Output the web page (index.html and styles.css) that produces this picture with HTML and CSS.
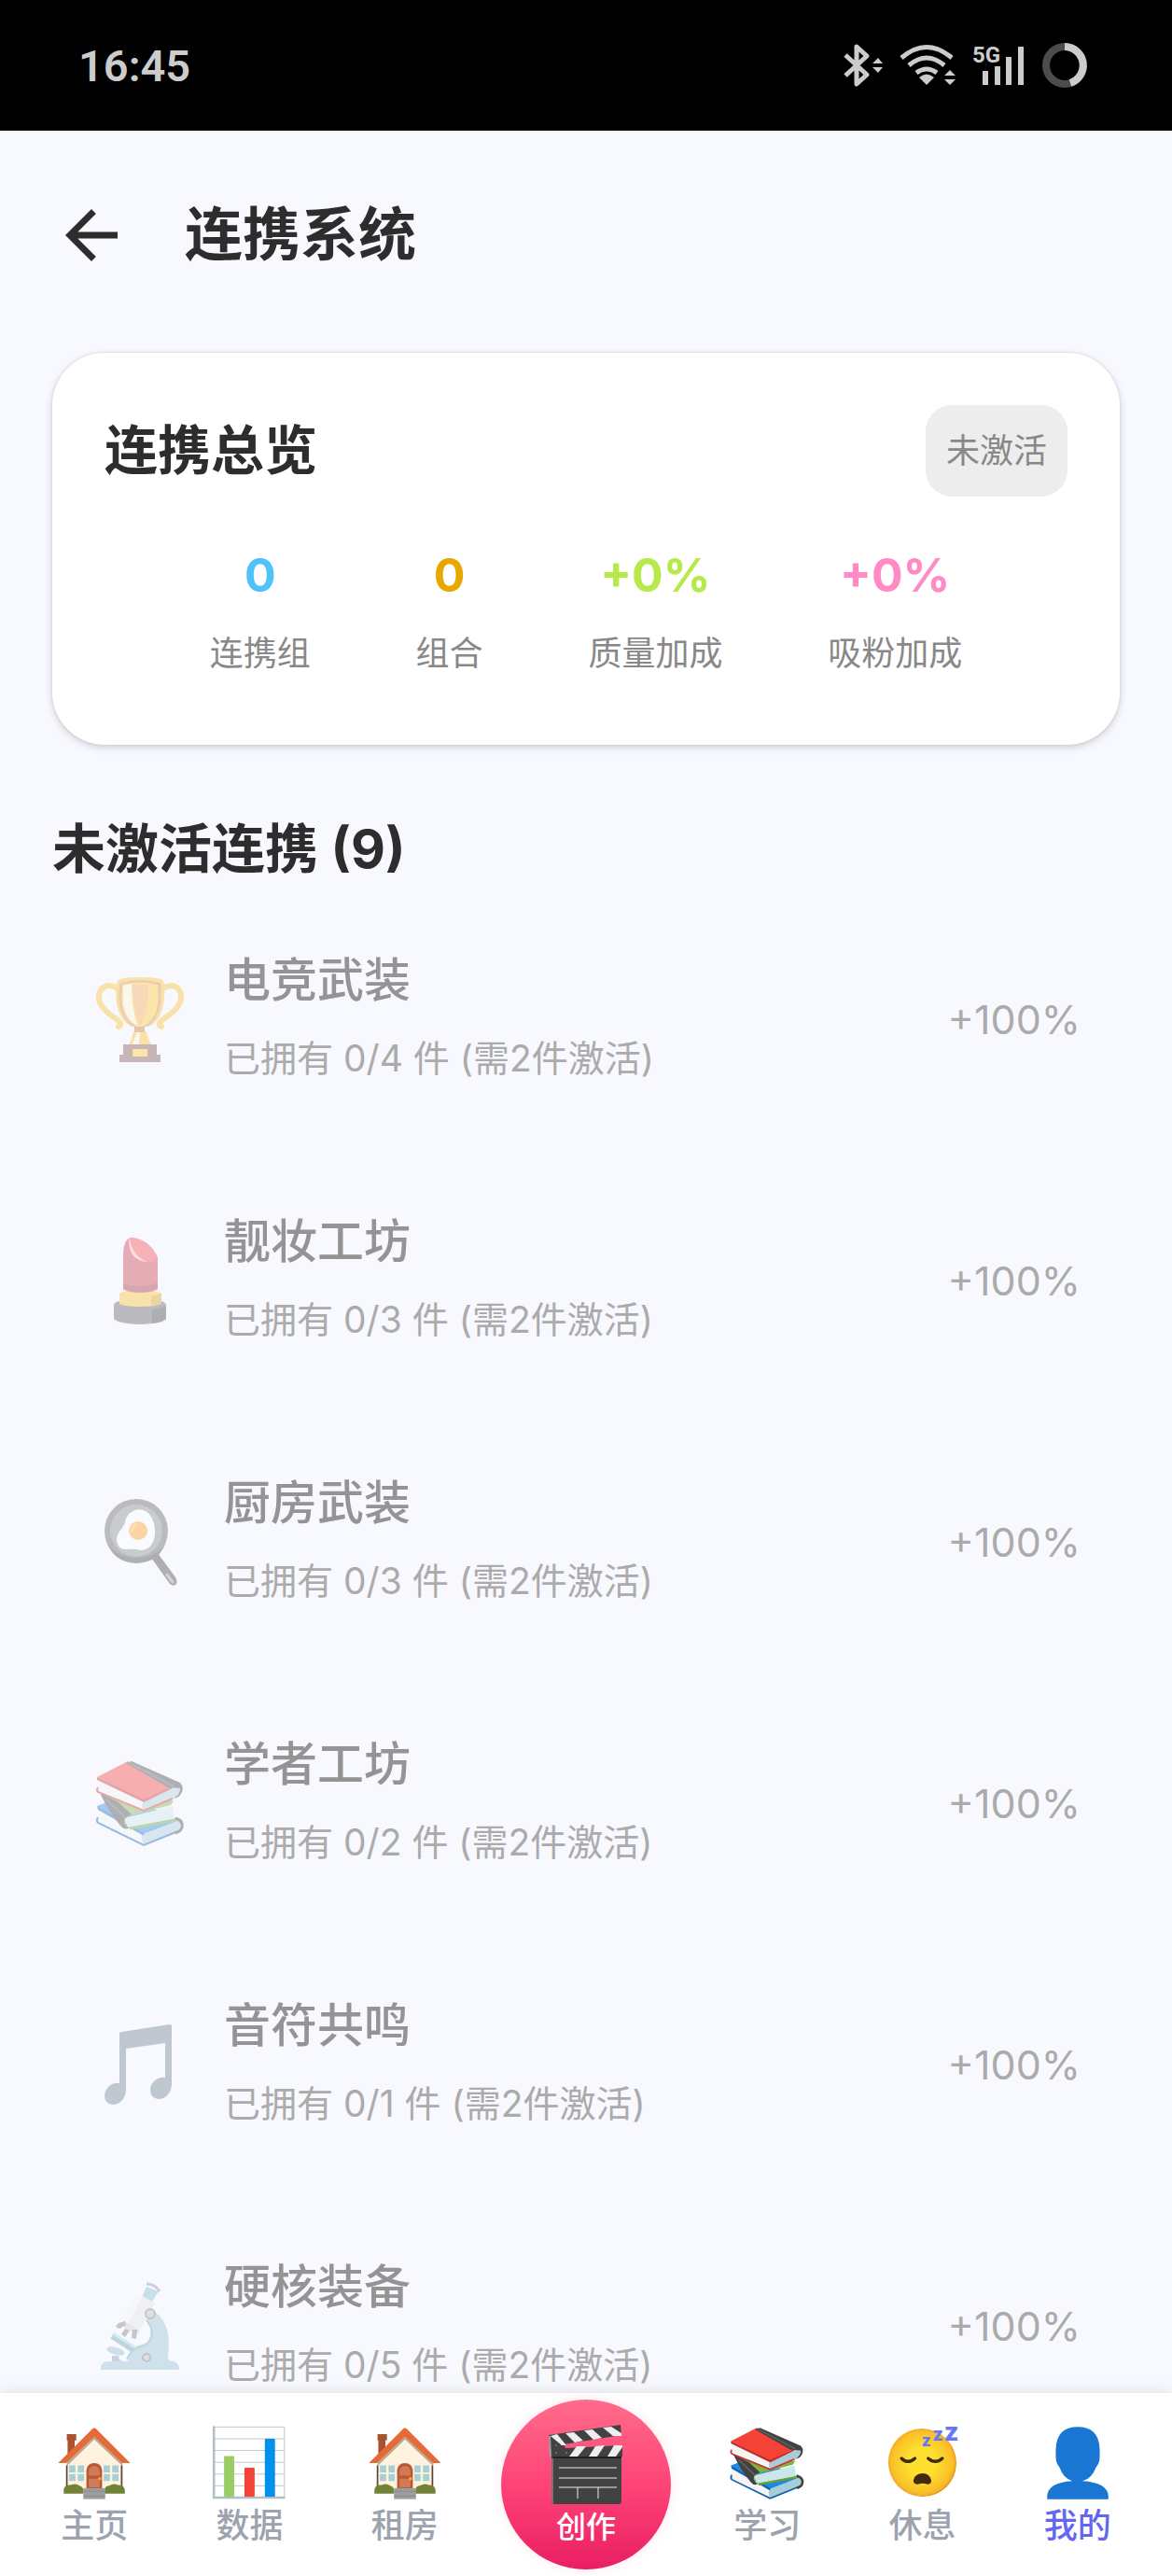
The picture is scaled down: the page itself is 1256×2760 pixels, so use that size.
FILE: index.html
```html
<!DOCTYPE html>
<html lang="zh-CN">
<head>
	<meta charset="UTF-8">
	<meta name="viewport" content="width=device-width, initial-scale=1">
	<title>连携系统</title>
	<link rel="stylesheet" href="styles.css">
</head>

<body>
	<!-- 公用图标 -->
	<svg class="icon-defs" aria-hidden="true">
		<symbol id="icon-books" viewBox="0 0 100 100">
			<path d="M4 53 L33 42 L95 69 L54 84 Z" fill="#1e88e5"/>
			<path d="M5 57 L54 83 L92 69 Q96 74 93 80 L54 94 L5 70 Z" fill="#f5f5f5"/>
			<path d="M54 83 L92 68 Q96 74 93 80 L54 94 Q50 88 54 83 Z" fill="#a9cdd8"/>
			<path d="M4 53 L54 82 L54 85 L5 57 Z" fill="#0d62b5"/>
			<path d="M5 65 Q3 69 5 71 L54 95 L91 80" fill="none" stroke="#0d5cab" stroke-width="2"/>
			<path d="M88 66 Q97 69 95 76 Q94 80 88 82" fill="none" stroke="#424242" stroke-width="3"/>
			<path d="M7 39 L30 48 L86 47 L83 52 L37 64 L33 77 Z" fill="#7cb342"/>
			<path d="M33 66 L85 53 L87 67 L37 77 Z" fill="#c9e7e6"/>
			<path d="M39 77 L88 68" stroke="#689f38" stroke-width="3"/>
			<path d="M7 39 L27 49 L41 62 Q32 65 33 71 Q34 75 39 76 Q34 80 29 74 Q17 60 7 39 Z" fill="#424242"/>
			<path d="M14 46 L35 66" stroke="#616161" stroke-width="2"/>
			<path d="M5 25 L54 48 L93 30 Q96 36 91 42 L54 57 L5 37 Z" fill="#f5f5f5"/>
			<path d="M54 48 L92 31 Q96 36 91 43 L54 57 Q50 52 54 48 Z" fill="#a9cdd8"/>
			<path d="M4 22 L37 5 L86 31 L54 47 Z" fill="#f44336"/>
			<path d="M4 22 L54 46 L84 32 L85 34 L54 49 L4 25 Z" fill="#c62828"/>
			<path d="M5 33 Q3 36 5 38 L54 58 L85 45" fill="none" stroke="#d32f2f" stroke-width="2"/>
			<path d="M35 7 L41 5 L93 28 Q98 33 94 40 Q92 44 86 45 Q94 40 93 34 L80 33 Z" fill="#424242"/>
			<path d="M39 7 L86 32" stroke="#616161" stroke-width="2"/>
		</symbol>
		<symbol id="icon-house" viewBox="0 0 100 100">
			<path d="M15 13 H27 V21 H25 V40 H16 V21 H15 Z" fill="#a9532f"/>
			<path d="M15 48 L50 14 L86 48 V88 H15 Z" fill="#fff3e0"/>
			<path d="M15 42 L50 11 L86 42 V54 L50 20 L15 54 Z" fill="#bcaa94"/>
			<path d="M15 53 V80 M85 53 V80" stroke="#5d4037" stroke-width="2"/>
			<path d="M50 5 Q52 5 54 8 L96 50 H86 L50 16 L14 50 H4 L46 8 Q48 5 50 5 Z" fill="#e66a35"/>
			<path d="M18 53 h8 v9 h-8 Z M29 53 h8 v9 h-8 Z M18 64 h8 v9 h-8 Z M29 64 h8 v9 h-8 Z M62 53 h8 v9 h-8 Z M73 53 h8 v9 h-8 Z M62 64 h8 v9 h-8 Z M73 64 h8 v9 h-8 Z" fill="#a5d0d6"/>
			<path d="M40 82 V59 Q41 50 50 50 Q59 50 60 59 V82 Z" fill="#b95738"/>
			<path d="M43 66 V60 Q44 54 50 54 Q56 54 57 60 V66 Z M43 70 h14 v11 h-14 Z" fill="#d07b58"/>
			<circle cx="57" cy="70" r="2" fill="#ffb300"/>
			<path d="M11 89 V84 Q12 77 20 78 Q27 75 31 79 Q36 80 36 85 V89 Z M63 89 V85 Q64 79 69 79 Q75 75 80 78 Q88 78 89 84 V89 Z" fill="#728237"/>
			<path d="M36 82 H64 V96 H36 Z" fill="#9e9e9e"/>
			<path d="M36 86 H64 M36 92 H64" stroke="#858585" stroke-width="1"/>
		</symbol>
	</svg>

	<div class="app">
		<div class="status-bar">
			<span class="status-time">16:45</span>
			<div class="status-icons">
				<svg width="42" height="50" viewBox="0 0 42 50">
					<path d="M2 14 L25 35 L14 45 V5 L25 15 L2 36" fill="none" stroke="#ccc" stroke-width="5" stroke-linejoin="round"/>
					<path d="M31 23 L37 17 L42 23 Z M31 27 L37 33 L42 27 Z" fill="#ccc"/>
				</svg>
				<svg width="60" height="50" viewBox="0 0 60 50">
					<path d="M2 17 Q29 -6 56 17 M10 25 Q29 9 48 25 M18 33 Q29 25 40 33" fill="none" stroke="#ccc" stroke-width="5"/>
					<path d="M21 38 Q29 31 37 38 L29 46 Z M48 36 L54 30 L60 36 Z M48 40 L54 46 L60 40 Z" fill="#ccc"/>
				</svg>
				<svg width="56" height="50" viewBox="0 0 56 50">
					<text class="status-net" x="0" y="22">5G</text>
					<path d="M14 31 V46 M27 26 V46 M39 16 V46 M52 5 V46" stroke="#ccc" stroke-width="6"/>
				</svg>
				<svg width="50" height="50" viewBox="0 0 50 50">
					<circle cx="25" cy="25" r="20" fill="none" stroke="#4c4c4c" stroke-width="8"/>
					<path d="M25 5 A20 20 0 0 1 31 44" fill="none" stroke="#ccc" stroke-width="8"/>
				</svg>
			</div>
		</div>

		<div class="header">
			<button type="button" class="back" aria-label="返回">
				<svg width="84" height="84" viewBox="0 0 24 24"><path d="M20 11H7.8l5.6-5.6L12 4l-8 8 8 8 1.4-1.4L7.8 13H20z" fill="#2d2d2d"/></svg>
			</button>
			<h1 class="header-title">连携系统</h1>
		</div>

		<div class="content">
			<div class="card">
				<div class="card-head">
					<h2 class="card-title">连携总览</h2>
					<span class="card-badge">未激活</span>
				</div>
				<div class="stats">
					<div class="stat">
						<div class="stat-value stat-blue">0</div>
						<div class="stat-label">连携组</div>
					</div>
					<div class="stat">
						<div class="stat-value stat-orange">0</div>
						<div class="stat-label">组合</div>
					</div>
					<div class="stat">
						<div class="stat-value stat-green">+0%</div>
						<div class="stat-label">质量加成</div>
					</div>
					<div class="stat">
						<div class="stat-value stat-pink">+0%</div>
						<div class="stat-label">吸粉加成</div>
					</div>
				</div>
			</div>

			<h2 class="section-title">未激活连携 (9)</h2>

			<ul class="list">
				<li class="item">
					<svg class="item-icon" viewBox="0 0 100 100">
						<path d="M29 20 Q24 14 15 14 Q5 17 6 29 Q8 39 25 50 Q32 55 27 58 M71 20 Q76 14 85 14 Q95 17 94 29 Q92 39 75 50 Q68 55 73 58" fill="none" stroke="#fbc02d" stroke-width="6" stroke-linecap="round"/>
						<path d="M26 9 Q28 5 50 5 Q72 5 75 9 Q78 18 75 34 Q72 53 58 58 H42 Q29 53 25 34 Q23 18 26 9 Z" fill="#fbc02d"/>
						<path d="M29 11 Q50 5 72 11 Q73 20 72 34 Q68 52 58 58 H42 Q31 51 28 34 Q26 20 29 11 Z" fill="#de8b48"/>
						<path d="M31 13 Q50 8 69 13 Q71 34 66 45 Q60 56 50 59 Q40 56 34 45 Q29 34 31 13 Z" fill="#ffca28"/>
						<path d="M32 14 L41 12 Q41 38 47 57 Q35 51 32 34 Z" fill="#fff8d2"/>
						<path d="M41 13 H59 Q60 38 50 59 Q42 40 41 13 Z" fill="#f9a84a"/>
						<path d="M43 63 H57 Q58 70 62 77 H38 Q42 70 43 63 Z" fill="#fbc02d"/>
						<path d="M47 63 H50 L49 77 H42 Z" fill="#fff8d2"/>
						<path d="M44 58 H55 V64 H44 Z" fill="#c9733d"/>
						<path d="M32 77 H68 V88 H72 V96 H28 V88 H32 Z" fill="#7f5348"/>
						<path d="M42 82 H58 V90 H42 Z" fill="#ffca28"/>
					</svg>
					<div class="item-text">
						<div class="item-name">电竞武装</div>
						<div class="item-desc">已拥有 0/4 件 (需2件激活)</div>
					</div>
					<span class="item-bonus">+100%</span>
				</li>
				<li class="item">
					<svg class="item-icon" viewBox="0 0 100 100">
						<path d="M22 77 Q22 73 28 72 H72 Q78 73 78 77 V91 Q74 96 50 97 Q26 96 22 91 Z" fill="#616161"/>
						<path d="M63 81 Q74 80 78 77 V91 Q74 95 63 96 Z" fill="#424242"/>
						<path d="M28 64 Q34 60 50 60 Q68 60 73 64 V75 Q66 78 50 78 Q33 78 28 75 Z" fill="#fbc02d"/>
						<path d="M62 67 L73 64 V75 L62 78 Z" fill="#d69e22"/>
						<path d="M32 24 Q32 6 40 4 Q59 5 69 25 V59 Q64 63 50 63 Q36 63 32 59 Z" fill="#c93c4b"/>
						<path d="M32 53 Q50 60 69 52 V59 Q50 66 32 59 Z" fill="#a52d3c"/>
						<path d="M40 4 Q59 5 69 25 Q66 31 58 30 Q36 23 38 6 Z" fill="#f44a4a"/>
						<path d="M39 5 Q41 23 58 30 Q39 29 38 8 Z" fill="#ffb6b3"/>
					</svg>
					<div class="item-text">
						<div class="item-name">靓妆工坊</div>
						<div class="item-desc">已拥有 0/3 件 (需2件激活)</div>
					</div>
					<span class="item-bonus">+100%</span>
				</li>
				<li class="item">
					<svg class="item-icon" viewBox="0 0 100 100">
						<path d="M62 67 L82 95 Q85 98 88 96 Q91 93 88 88 L69 62 Z" fill="#424242"/>
						<path d="M79 85 L85 93" stroke="#9e9e9e" stroke-width="3" stroke-linecap="round"/>
						<circle cx="46" cy="38" r="34" fill="#616161"/>
						<path d="M13 46 Q20 72 46 73 Q73 72 79 46 Q74 66 46 67 Q20 66 13 46 Z" fill="#424242"/>
						<circle cx="46" cy="38" r="28" fill="#82878c"/>
						<path d="M41 18 Q49 12 59 19 Q67 28 66 42 Q64 59 50 59 Q44 57 37 58 Q26 59 25 48 Q25 42 31 35 Q34 31 35 25 Q37 20 41 18 Z" fill="#fff"/>
						<circle cx="48" cy="38" r="10" fill="#ff9f1a"/>
						<path d="M40 38 Q40 31 46 30 Q46 36 40 40 Z" fill="#ffc258"/>
					</svg>
					<div class="item-text">
						<div class="item-name">厨房武装</div>
						<div class="item-desc">已拥有 0/3 件 (需2件激活)</div>
					</div>
					<span class="item-bonus">+100%</span>
				</li>
				<li class="item">
					<svg class="item-icon"><use href="#icon-books"/></svg>
					<div class="item-text">
						<div class="item-name">学者工坊</div>
						<div class="item-desc">已拥有 0/2 件 (需2件激活)</div>
					</div>
					<span class="item-bonus">+100%</span>
				</li>
				<li class="item">
					<svg class="item-icon" viewBox="0 0 100 100">
						<path d="M28 17 Q28 15 30 15 L82 7 Q84 7 84 9 V72 Q83 82 75 86 Q66 89 62 82 Q59 73 66 67 Q71 63 77 64 V27 L35 33 V78 Q34 88 26 92 Q17 95 13 88 Q10 80 17 73 Q22 69 28 70 Z" fill="#6b808c"/>
					</svg>
					<div class="item-text">
						<div class="item-name">音符共鸣</div>
						<div class="item-desc">已拥有 0/1 件 (需2件激活)</div>
					</div>
					<span class="item-bonus">+100%</span>
				</li>
				<li class="item">
					<svg class="item-icon" viewBox="0 0 100 100">
						<path d="M8 97 V94 Q9 88 16 88 H37 Q40 72 53 70 Q63 66 61 53 Q60 48 56 44 L66 35 Q85 49 80 83 Q80 88 86 88 Q92 90 92 97 Z" fill="#94c2d1"/>
						<path d="M57 44 Q67 55 60 67 Q57 71 51 72 Q42 73 36 86" fill="none" stroke="#6aa7b2" stroke-width="2"/>
						<path d="M20 61 L43 76" stroke="#6f9faa" stroke-width="6"/>
						<path d="M21 58 L45 73" stroke="#9bd9ee" stroke-width="3"/>
						<path d="M20 82 L27 82 L28 86 L31 88 H20 Z" fill="#829fab"/>
						<ellipse cx="24" cy="77" rx="10" ry="4" transform="rotate(16 24 77)" fill="#8fb9c6"/>
						<path d="M57 8 L70 13 L63 24 L52 19 Z" fill="#85bdd0"/>
						<path d="M57 5 Q66 5 71 13" fill="none" stroke="#8b9296" stroke-width="3"/>
						<path d="M48 16 L66 25 L49 56 L31 44 Z" fill="#e4e4e4"/>
						<path d="M48 16 L53 18 L37 48 L31 44 Z" fill="#f5f5f5"/>
						<path d="M32 44 L50 55 L46 59 L33 52 Z" fill="#cecece"/>
						<path d="M27 47 L34 45 L35 49 L28 53 L24 51 Z M34 53 L39 55 L34 62 L30 59 Z M42 54 L47 54 L46 64 L41 63 Z" fill="#7b7b7b"/>
						<circle cx="61" cy="37" r="5" fill="#bdbdbd" stroke="#777" stroke-width="2"/>
						<circle cx="57" cy="84" r="4" fill="#bdbdbd" stroke="#777" stroke-width="2"/>
					</svg>
					<div class="item-text">
						<div class="item-name">硬核装备</div>
						<div class="item-desc">已拥有 0/5 件 (需2件激活)</div>
					</div>
					<span class="item-bonus">+100%</span>
				</li>
			</ul>
		</div>

		<nav class="tabbar">
			<a href="#" class="tab">
				<svg class="tab-icon"><use href="#icon-house"/></svg>
				<span>主页</span>
			</a>
			<a href="#" class="tab">
				<svg class="tab-icon" viewBox="0 0 100 100">
					<rect x="5" y="4" width="90" height="91" fill="#fff"/>
					<path d="M5 19 H95 M5 34 H95 M5 49 H95 M5 64 H95 M5 79 H95" stroke="#b0bec5" stroke-width="1"/>
					<path d="M5 4 H95 V95" fill="none" stroke="#b0bec5" stroke-width="1"/>
					<path d="M5 3 V94 H96" fill="none" stroke="#b0bec5" stroke-width="3"/>
					<rect x="18" y="41" width="13" height="52" rx="1" fill="#9ccc65"/>
					<rect x="44" y="56" width="13" height="37" rx="1" fill="#f44336"/>
					<rect x="70" y="19" width="13" height="74" rx="1" fill="#0091ea"/>
				</svg>
				<span>数据</span>
			</a>
			<a href="#" class="tab">
				<svg class="tab-icon"><use href="#icon-house"/></svg>
				<span>租房</span>
			</a>
			<div class="tab-center">
				<a href="#" class="create">
					<svg class="create-icon" viewBox="0 0 80 85">
						<path d="M3 34 H78 V82 Q78 85 75 85 H6 Q3 85 3 82 Z" fill="#424242"/>
						<path d="M3 34 H5 V85 Q3 85 3 82 Z" fill="#757575"/>
						<path d="M0 11 L77 0 L78 11 L16 21 L18 25 L79 22 V34 H2 Z" fill="#424242"/>
						<path d="M2 12 L9 10 L19 22 L14 22 Z M18 9 L27 8 L37 17 L28 19 Z M38 6 L47 5 L57 14 L48 16 Z M58 3 L67 2 L78 9 V12 L69 12 Z M30 23 L40 23 L31 34 H22 Z M50 23 L60 22 L52 34 H43 Z M70 22 H79 V24 L72 34 H63 Z" fill="#eee"/>
						<path d="M1 12 L2 34" stroke="#9e9e9e" stroke-width="2"/>
						<circle cx="8" cy="22" r="1" fill="#777"/><circle cx="8" cy="30" r="1" fill="#777"/><circle cx="19" cy="30" r="1" fill="#777"/>
						<path d="M3 35 H78" stroke="#000" stroke-width="1"/>
						<path d="M11 46 H73 M11 57 H73 M11 67 H73 M31 67 V79 M53 67 V79" stroke="#eee" stroke-width="1"/>
					</svg>
					<span>创作</span>
				</a>
			</div>
			<a href="#" class="tab">
				<svg class="tab-icon"><use href="#icon-books"/></svg>
				<span>学习</span>
			</a>
			<a href="#" class="tab">
				<svg class="tab-icon" viewBox="0 0 100 100">
					<defs>
						<radialGradient id="face">
							<stop offset="40%" stop-color="#fde030"/>
							<stop offset="90%" stop-color="#f9c027"/>
							<stop offset="100%" stop-color="#f5a82a"/>
						</radialGradient>
					</defs>
					<circle cx="51" cy="50" r="43" fill="#e68f12"/>
					<circle cx="50" cy="49" r="43" fill="url(#face)"/>
					<path d="M24 44 Q32 52 41 44 M58 44 Q67 52 76 44" fill="none" stroke="#422b0d" stroke-width="4" stroke-linecap="round"/>
					<path d="M39 72 Q41 63 51 63 Q60 63 62 72 Q62 77 57 77 Q51 75 45 77 Q39 77 39 72 Z" fill="#422b0d"/>
					<g class="zzz">
						<text x="50" y="28" font-size="22">z</text>
						<text x="64" y="22" font-size="25">z</text>
						<text x="79" y="22" font-size="34">z</text>
					</g>
				</svg>
				<span>休息</span>
			</a>
			<a href="#" class="tab tab-active">
				<svg class="tab-icon" viewBox="0 0 100 100">
					<path d="M50 4 Q77 4 78 32 V42 Q78 50 73 56 Q68 70 56 73 Q88 75 89 92 V96 H11 V92 Q12 75 43 73 Q32 70 27 56 Q22 50 22 42 V32 Q23 4 50 4 Z" fill="#1976d2"/>
				</svg>
				<span>我的</span>
			</a>
		</nav>
	</div>
</body>
</html>
```

FILE: styles.css
```css
* {
	box-sizing: border-box;
}

body {
	margin: 0;
	background: #f8f9ff;
	color: #2d2d2d;
	font-family: Inter, "Noto Sans CJK SC", sans-serif;
}

h1, h2, ul {
	margin: 0;
	padding: 0;
}

a {
	text-decoration: none;
}

svg {
	display: block;
	flex-shrink: 0;
}

.icon-defs {
	position: absolute;
	width: 0;
	height: 0;
}

.app {
	display: flex;
	flex-direction: column;
	height: 100vh;
}

/* 状态栏 */
.status-bar {
	display: flex;
	flex-shrink: 0;
	align-items: center;
	justify-content: space-between;
	height: 140px;
	padding: 0 90px 0 84px;
	background: #000;
	color: #ccc;
}

.status-time {
	font-family: Roboto, sans-serif;
	font-size: 47px;
	font-weight: 600;
}

.status-icons {
	display: flex;
	align-items: center;
	gap: 18px;
}

.status-net {
	font-family: Roboto, sans-serif;
	font-size: 24px;
	font-weight: 700;
	fill: #ccc;
}

/* 标题栏 */
.header {
	display: flex;
	flex-shrink: 0;
	align-items: center;
	gap: 58px;
	height: 224px;
	padding: 0 56px;
}

.back {
	padding: 0;
	border: 0;
	background: none;
}

.header-title {
	font-size: 62px;
	line-height: 84px;
}

.content {
	flex: 1;
	min-height: 0;
	padding: 14px 56px 0;
	overflow-y: auto;
	scrollbar-width: none;
}

/* 总览卡片 */
.card {
	padding: 56px 56px 70px;
	border-radius: 56px;
	background: #fff;
	box-shadow: 0 3px 8px rgba(0, 0, 0, 0.16), 0 0 3px rgba(0, 0, 0, 0.12);
}

.card-head {
	display: flex;
	align-items: center;
	justify-content: space-between;
}

.card-title {
	font-size: 57px;
	line-height: 84px;
}

.card-badge {
	padding: 22px;
	border-radius: 28px;
	background: #ededed;
	color: #888;
	font-size: 36px;
	line-height: 54px;
}

.stats {
	display: flex;
	justify-content: space-evenly;
	margin-top: 42px;
	text-align: center;
}

.stat-value {
	font-size: 50px;
	font-weight: 700;
	line-height: 84px;
}

.stat-label {
	margin-top: 14px;
	color: #888;
	font-size: 36px;
	line-height: 56px;
}

.stat-blue { color: #4fc3f7; }
.stat-orange { color: #e6a800; }
.stat-green { color: #b8e94a; }
.stat-pink { color: #ff8ac4; }

.section-title {
	margin-top: 70px;
	font-size: 57px;
	line-height: 84px;
}

/* 连携列表 */
.list {
	list-style: none;
}

.item {
	display: flex;
	align-items: center;
	gap: 40px;
	height: 280px;
	padding: 0 42px 0 44px;
}

.item-icon {
	width: 100px;
	height: 100px;
	opacity: 0.4;
}

.item-text {
	flex: 1;
}

.item-name {
	color: #949494;
	font-size: 50px;
	font-weight: 500;
	line-height: 84px;
}

.item-desc {
	color: #ababab;
	font-size: 39px;
	line-height: 84px;
}

.item-bonus {
	color: #ababab;
	font-size: 43px;
	line-height: 84px;
}

/* 底部导航 */
.tabbar {
	display: flex;
	position: relative;
	flex-shrink: 0;
	align-items: center;
	height: 196px;
	padding: 0 18px;
	background: #fff;
	box-shadow: 0 -1px 14px rgba(0, 0, 0, 0.1);
}

.tab {
	display: flex;
	flex: 1;
	flex-direction: column;
	align-items: center;
	padding-top: 4px;
	color: #9ca3af;
	font-size: 36px;
	font-weight: 500;
	line-height: 50px;
}

.tab-icon {
	width: 84px;
	height: 84px;
	overflow: visible;
}

.tab-active {
	color: #6366f1;
}

.tab-center {
	display: flex;
	justify-content: center;
	width: 222px;
}

.create {
	display: flex;
	flex-direction: column;
	align-items: center;
	justify-content: center;
	width: 182px;
	height: 182px;
	padding-top: 6px;
	border-radius: 50%;
	background: linear-gradient(#ff6b8a, #ff4477 50%, #e91e63);
	box-shadow: 0 0 14px rgba(233, 30, 99, 0.1);
	color: #fff;
	font-size: 32px;
	font-weight: 500;
	line-height: 50px;
}

.create-icon {
	width: 80px;
	height: 85px;
}

.zzz {
	fill: #6478f5;
	font-family: Roboto, sans-serif;
	font-weight: 900;
}
```
